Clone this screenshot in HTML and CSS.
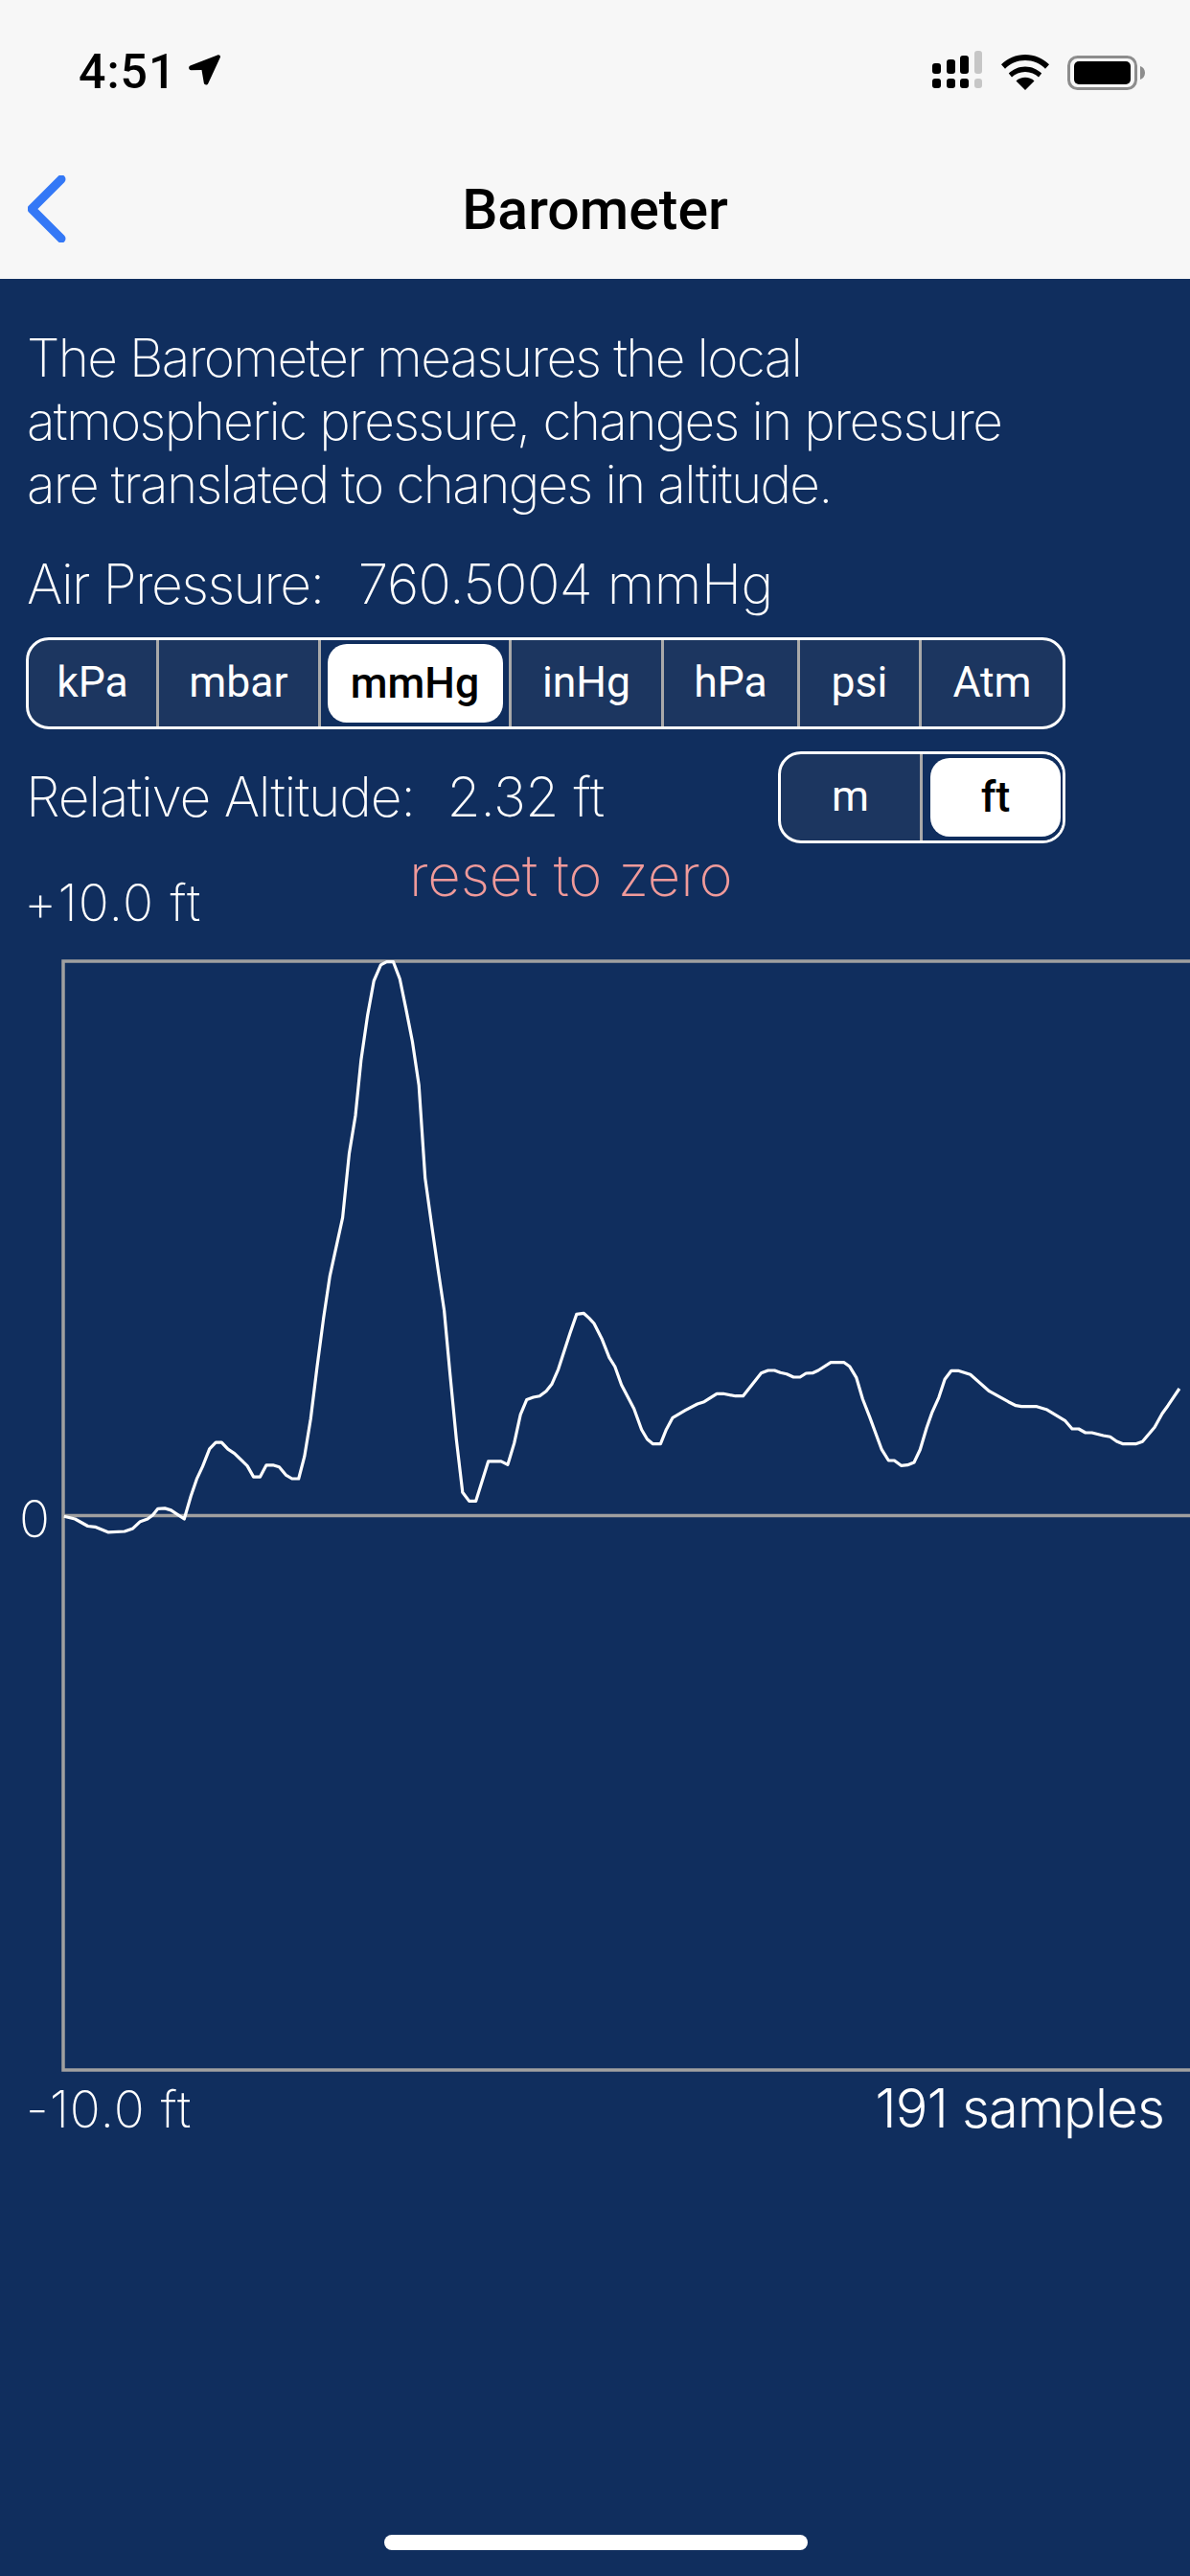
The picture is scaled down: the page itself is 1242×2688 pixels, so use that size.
FILE: index.html
```html
<!DOCTYPE html>
<html lang="en">
<head>
<meta charset="utf-8">
<title>Barometer</title>
<link rel="stylesheet" href="styles.css">
</head>
<body>
<div class="screen">
  <header class="top">
    <div class="status">
      <div class="clock">
        <span class="time">4:51</span>
        <svg class="loc" viewBox="0 0 33 32" width="33" height="32"><path d="M1.500 11.500 30 .4c2-.8 3.500.8 2.800 2.600L20.300 30c-.9 2.300-4.200 1.900-4.500-.4L13.500 16 2.600 16.300c-2.600.1-3.400-3.700-1.100-4.800z"/></svg>
      </div>
      <div class="sys">
        <svg class="signal" viewBox="0 0 53 40" width="53" height="40">
          <rect x="0" y="13" width="9" height="11" rx="3"/><rect x="15" y="9" width="9" height="15" rx="3"/><rect x="29" y="5" width="9" height="19" rx="3"/>
          <rect x="44" y="0" width="8" height="24" rx="3" class="dim"/>
          <rect x="0" y="29" width="9" height="10" rx="3"/><rect x="15" y="29" width="9" height="10" rx="3"/><rect x="29" y="29" width="9" height="10" rx="3"/><rect x="44" y="29" width="8" height="10" rx="3" class="dim"/>
        </svg>
        <svg class="wifi" viewBox="0 0 50 37" width="50" height="37">
          <path d="M25 37 15.500 27.500c5-5 14-5 19 0z"/>
          <path d="M25 13.500c-6.700 0-12.700 2.800-17.200 7L11 24.500c3.500-3.400 8.600-5.500 14-5.500s10.500 2.100 14 5.500l3.200-4c-4.500-4.200-10.500-7-17.200-7z" transform="translate(0 -1)"/>
          <path d="M25 0C15.300 0 6.500 3.900 0 10.200l4 4.500C9.400 9.400 16.800 6 25 6s15.600 3.400 21 8.700l4-4.500C43.500 3.900 34.700 0 25 0z"/>
        </svg>
        <svg class="battery" viewBox="0 0 81 36" width="81" height="36">
          <rect x="1.500" y="1.500" width="70" height="33" rx="9" class="shell"/>
          <rect x="7" y="6" width="59" height="24" rx="5"/>
          <path d="M76 11c3 1 5 3.500 5 7s-2 6-5 7z" class="nub"/>
        </svg>
      </div>
    </div>
    <nav class="navbar">
      <svg class="back" viewBox="0 0 40 70" width="40" height="70"><path d="M35 4 4 35l31 31"/></svg>
      <h1 class="title">Barometer</h1>
    </nav>
  </header>

  <main class="content">
    <p class="intro">The Barometer measures the local<br>atmospheric pressure, changes in pressure<br>are translated to changes in altitude.</p>
    <div class="readout pressure"><span class="label">Air Pressure:</span><span class="value">760.5004 mmHg</span></div>

    <div class="seg seg-units">
      <span class="opt w1">kPa</span>
      <span class="opt w2">mbar</span>
      <span class="opt w3 on"><b class="pill">mmHg</b></span>
      <span class="opt w4">inHg</span>
      <span class="opt w5">hPa</span>
      <span class="opt w6">psi</span>
      <span class="opt w7">Atm</span>
    </div>

    <div class="alt-row">
      <div class="readout alt"><span class="label">Relative Altitude:</span><span class="value">2.32 ft</span></div>
      <div class="seg seg-alt">
        <span class="opt m">m</span>
        <span class="opt ft on"><b class="pill">ft</b></span>
      </div>
    </div>

    <div class="reset-row">
      <span class="max">+10.0 ft</span>
      <span class="reset">reset to zero</span>
    </div>

    <div class="chart">
      <span class="zero">0</span>
      <svg class="plot" viewBox="64 1000 1178 1164" width="1178" height="1164">
        <path class="axis" d="M1242 1003H66V2160H1242M66 1581.500H1242"/>
        <polyline class="trace" points="66.8,1582.2 78.3,1585 91.7,1592.5 99.3,1593.3 112.7,1598.8 130,1598 138.7,1594.9 146.4,1587.7 154,1585 159.4,1581 164.8,1574.3 172,1573.9 178.500,1575.9 192.3,1585 199.2,1561.2 205.3,1543.4 211.4,1530.4 218.7,1511.8 225.2,1505.1 231.3,1505.1 237.9,1512.2 244.7,1516.6 258.1,1529.6 264.6,1541.1 271.5,1541.1 278,1528.8 284.9,1528.8 291.4,1530.8 298.3,1539.1 304.8,1543 311.7,1543 317.8,1519.7 324.3,1480.2 330.9,1426.8 337.7,1375.4 344.2,1331.9 357.6,1270.6 364.5,1203.4 371,1163.9 376.8,1106.5 383.7,1059.1 390.2,1023.5 397.4,1006.9 403.6,1003.7 410.5,1003.7 417.3,1021.5 423.8,1053.1 430.4,1086.8 437.2,1132.2 443.7,1229.1 450.3,1276.6 457.1,1324 463.6,1367.5 469.8,1434.7 476.3,1501.9 482.8,1557.3 489.7,1566.4 496.6,1566.4 509.6,1524.9 523,1524.9 529.9,1528.4 536.7,1505.9 543.2,1476.2 549.8,1460.4 556.6,1458 563.2,1456.8 570,1451.7 575.8,1444.6 582.7,1428.8 594.9,1391.2 601.8,1371.4 609.1,1370.3 614.8,1375.4 620,1381 628,1396.7 635.9,1416.7 641.8,1426 648.6,1445 661.7,1470 669.6,1491.7 675.5,1501.7 681.5,1506.7 689.4,1506.7 695.4,1491.7 702.1,1479.3 715.2,1471.7 727.9,1465 735,1462.7 748.1,1454.3 754.9,1454.3 767.6,1456.7 775.5,1456.7 794.5,1432.7 801.7,1430 808.4,1430 814.4,1432.3 821.1,1433.7 828.2,1437 835,1437 841.3,1433 848.1,1432.7 854,1430 867.1,1421.7 881,1421.7 886.6,1425.7 893.7,1437.3 900.4,1460 907.6,1478.3 920.3,1512.7 927.4,1524 933.4,1524 940.5,1529.3 947.2,1528.7 954,1526 960.3,1512.7 967.1,1490 973,1473.3 979.8,1458.3 986.1,1439.3 992.9,1430.3 1000,1430.3 1012.7,1434.3 1032.5,1451.7 1052.4,1462.7 1060.3,1466.7 1066.2,1467.7 1082.1,1467.7 1092,1470.7 1111.9,1482.7 1119,1491 1125.8,1491 1132.9,1495 1139.6,1495 1151.5,1498 1158.7,1499.3 1165.4,1504 1172.2,1506.7 1185.3,1506.7 1192.4,1504.3 1205.1,1489.3 1213,1475 1219,1466.7 1230.9,1449"/>
      </svg>
    </div>

    <div class="foot">
      <span class="min">-10.0 ft</span>
      <span class="samples">191 samples</span>
    </div>
  </main>

  <div class="home"></div>
</div>
</body>
</html>
```

FILE: styles.css
```css
* { box-sizing: border-box; }
html, body { margin: 0; padding: 0; }
body { width: 1242px; height: 2688px; overflow: hidden; background: #102e5e; font-family: Inter, "Liberation Sans", sans-serif; }
.screen { position: relative; display: flex; flex-direction: column; width: 1242px; height: 2688px; }

.top { height: 291px; background: #f7f7f7; color: #000; }
.status { display: flex; justify-content: space-between; align-items: flex-start; height: 154px; padding: 50px 47px 0 82px; }
.clock { display: flex; align-items: center; gap: 13px; }
.time { font-family: Roboto, sans-serif; font-weight: 500; font-size: 50px; line-height: 50px; letter-spacing: 1px; }
.loc { fill: #000; margin-top: -4px; }
.sys { display: flex; align-items: flex-start; gap: 19px; margin-top: 5px; }
.signal { fill: #000; margin-top: -2px; }
.signal .dim { fill: #c6c6c6; }
.wifi { fill: #000; margin-top: 2px; }
.battery { fill: #000; margin-top: 3px; }
.battery .shell { fill: none; stroke: #8d8d8d; stroke-width: 3; }
.battery .nub { fill: #8d8d8d; }

.navbar { position: relative; display: flex; align-items: center; justify-content: center; height: 137px; padding-bottom: 7px; }
.back { position: absolute; left: 29px; top: 29px; fill: none; stroke: #3478f6; stroke-width: 9; stroke-linecap: round; stroke-linejoin: round; }
.title { margin: 0; font-family: Roboto, sans-serif; font-weight: 500; font-size: 59px; line-height: 60px; }

.content { display: flex; flex-direction: column; flex: 1; color: #fff; font-weight: 170; }
.intro { margin: 49px 0 0 28px; font-size: 55px; line-height: 66px; letter-spacing: -1.7px; }
.readout { display: flex; font-size: 57px; }
.pressure { margin: 39px 0 0 28px; line-height: 66px; }
.pressure .label { letter-spacing: -1.6px; }
.pressure .value { margin-left: 36px; letter-spacing: -0.5px; }

.seg { display: flex; height: 96px; border: 3.500px solid #fff; border-radius: 24px; background: #1c3660; font-family: Roboto, sans-serif; font-weight: 400; font-size: 44.500px; overflow: hidden; }
.seg-units { width: 1085px; margin: 22px 0 0 27px; }
.opt { display: flex; align-items: center; justify-content: center; border-right: 3px solid #a9a9a9; padding-bottom: 2px; }
.opt:last-child { border-right: 0; }
.w1 { width: 136px; } .w2 { width: 169px; } .w3 { width: 199px; } .w4 { width: 159px; } .w5 { width: 142px; } .w6 { width: 127px; } .w7 { flex: 1; }
.on { background: #102e5e; padding: 0; }
.pill { display: flex; align-items: center; justify-content: center; width: 183px; height: 82px; background: #fff; color: #000; border-radius: 20px; font-weight: 500; }

.alt-row { display: flex; align-items: flex-start; justify-content: space-between; width: 1112px; margin-top: 23px; padding-left: 27px; }
.alt { line-height: 96px; }
.alt .label { letter-spacing: -1.300px; }
.alt .value { margin-left: 34px; letter-spacing: -0.5px; }
.seg-alt { width: 300px; }
.m { width: 148px; }
.ft { flex: 1; justify-content: flex-end; padding-right: 2px; }
.ft .pill { width: 136px; }

.reset-row { display: grid; height: 120px; }
.reset-row > span { grid-area: 1 / 1; }
.max { margin: 29px 0 0 25px; font-size: 53px; line-height: 66px; letter-spacing: 1.200px; }
.reset { margin: 0 0 0 427px; color: #f09a9a; font-size: 60px; line-height: 66px; letter-spacing: -0.2px; }

.chart { position: relative; height: 1164px; padding-left: 64px; }
.plot { display: block; }
.axis { fill: none; stroke: #a0a0a0; stroke-width: 3.500; }
.trace { fill: none; stroke: #fff; stroke-width: 3.200; stroke-linejoin: round; }
.zero { position: absolute; left: 20px; top: 552px; font-size: 53px; line-height: 66px; }

.foot { display: flex; justify-content: space-between; align-items: baseline; padding: 3px 27px 0 27px; line-height: 66px; }
.min { font-size: 53px; letter-spacing: 1px; }
.samples { font-size: 56px; font-weight: 300; letter-spacing: -0.8px; }

.home { position: absolute; left: 401px; bottom: 27px; width: 442px; height: 16px; border-radius: 8px; background: #fff; }
```
